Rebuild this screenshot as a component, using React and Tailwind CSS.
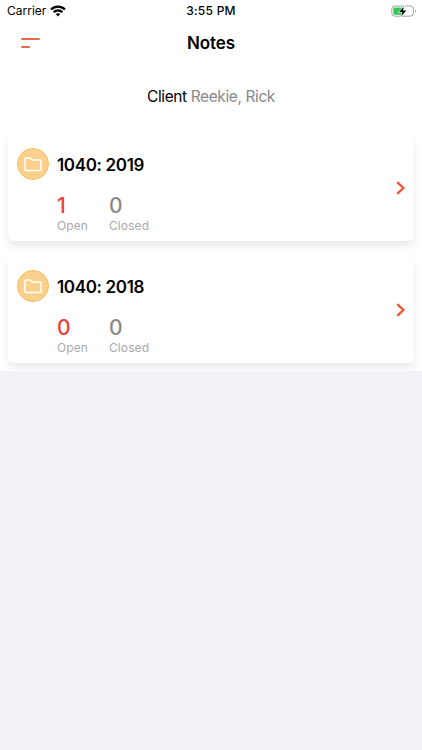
const cards = [
  { title: '1040: 2019', open: 1, closed: 0 },
  { title: '1040: 2018', open: 0, closed: 0 },
];

function WifiIcon() {
  return (
    <svg className="h-[12px] w-[16px]" viewBox="0 0 16 12" fill="none" stroke="#000" strokeWidth="2.3">
      <path d="M1 4.5C4.9 .7 11.1 .7 15 4.5" />
      <path d="M3.6 7.2C6.1 4.9 9.9 4.9 12.4 7.2" />
      <path d="M8 11.4 5.7 9.1Q8 7.2 10.3 9.1Z" fill="#000" stroke="none" />
    </svg>
  );
}

function BatteryIcon() {
  return (
    <svg className="h-[13px] w-[26px]" viewBox="0 0 26 13" fill="none">
      <rect x=".8" y="1" width="21.6" height="10.2" rx="3" stroke="#a3a3a3" />
      <path d="M24.2 4.6v3.2c1.3-.6 1.3-2.6 0-3.2Z" fill="#999" />
      <rect x="2.4" y="2.5" width="9.4" height="7.2" rx="1.3" fill="#35c759" />
      <path d="M13 1.8 8 7h3.2l-1 4.2L15.4 5.6H12Z" fill="#000" stroke="#fff" strokeWidth="1.1" paintOrder="stroke" />
    </svg>
  );
}

function FolderIcon() {
  return (
    <div className="flex size-8 items-center justify-center rounded-full border border-[#f6bd62] bg-[#fad08c]">
      <svg className="h-[16px] w-[18px]" viewBox="0 0 18 16" fill="none" stroke="#fff" strokeWidth="1.5" strokeLinejoin="round">
        <path d="M2 1.9h4.4l1.7 2.1H16q1 0 1 1v8.6q0 1-1 1H2q-1 0-1-1V2.9q0-1 1-1Z" />
      </svg>
    </div>
  );
}

function Count({ value, label, color }) {
  return (
    <div className="flex flex-col">
      <span className={`text-[21px] leading-6 font-medium ${color}`}>{value}</span>
      <span className="text-[12px] leading-4 tracking-[0.1px] text-[#a9a9ac]">{label}</span>
    </div>
  );
}

function NoteCard({ title, open, closed }) {
  return (
    <div className="flex h-[106px] items-center justify-between rounded-md bg-white pr-2 pl-[9px] shadow-[0_5px_9px_rgba(0,0,0,0.09)]">
      <div className="flex h-full flex-col pt-[13px]">
        <div className="flex items-center gap-2">
          <FolderIcon />
          <h2 className="pt-[2px] text-[17px] leading-6 font-semibold tracking-[-0.35px] text-black">{title}</h2>
        </div>
        <div className="mt-[14px] flex pl-10">
          <div className="w-[52px]">
            <Count value={open} label="Open" color="text-[#ee4036]" />
          </div>
          <Count value={closed} label="Closed" color="text-[#89898c]" />
        </div>
      </div>
      <svg className="h-[14px] w-[10px]" viewBox="0 0 10 14" fill="none" stroke="#e85a38" strokeWidth="2.4" strokeLinecap="round">
        <path d="m2 1.8 5.4 5.2L2 12.2" />
      </svg>
    </div>
  );
}

export default function App() {
  return (
    <div className="flex h-[750px] w-full flex-col overflow-hidden bg-[#f2f1f7] font-['Inter',sans-serif]">
      <div className="h-[371px] overflow-hidden bg-white">
        <div className="grid h-[22px] grid-cols-3 items-center pr-[5px] pl-[7px] text-[12px] text-black">
          <div className="flex items-center gap-1">
            <span>Carrier</span>
            <WifiIcon />
          </div>
          <span className="pr-[2px] text-center font-medium tracking-[0.25px]">3:55 PM</span>
          <div className="flex justify-end">
            <BatteryIcon />
          </div>
        </div>
        <header className="grid h-[42px] grid-cols-3 items-center px-[21px]">
          <div className="flex flex-col gap-[6px]">
            <div className="h-[2px] w-[19px] rounded-full bg-[#e66b4a]" />
            <div className="h-[2px] w-[9px] rounded-full bg-[#e66b4a]" />
          </div>
          <h1 className="pt-[2px] text-center text-[17px] font-semibold tracking-[-0.1px] text-black">Notes</h1>
        </header>
        <div className="flex h-[71px] items-center justify-center pb-[6px]">
          <p className="text-[15.5px] tracking-[-0.4px] text-[#88888b]">
            <span className="text-black">Client</span> Reekie, Rick
          </p>
        </div>
        <main className="flex flex-col gap-4 px-2">
          {cards.map((card) => (
            <NoteCard key={card.title} {...card} />
          ))}
        </main>
      </div>
    </div>
  );
}
